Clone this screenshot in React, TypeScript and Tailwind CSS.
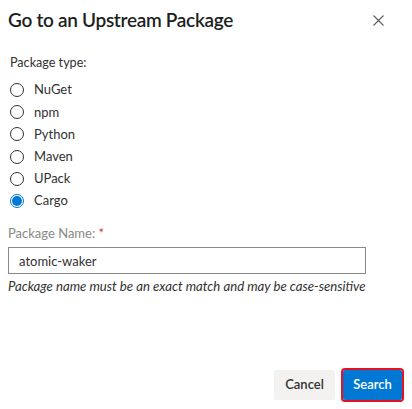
import { useState } from "react";

const types = ["NuGet", "npm", "Python", "Maven", "UPack", "Cargo"];

export default function App() {
  const [selected, setSelected] = useState("Cargo");
  const [name, setName] = useState("atomic-waker");

  return (
    <div
      className="flex flex-col h-[409px] w-[412px] bg-white text-[#323130]"
      style={{ fontFamily: 'Lato, "Noto Sans", sans-serif' }}
    >
      {/* Header */}
      <div className="flex items-start justify-between pl-2 pr-[28px] pt-[6px]">
        <h1 className="text-[19px] leading-[28px] font-semibold tracking-[-0.3px] text-[#201f1e]">
          Go to an Upstream Package
        </h1>
        <button className="mt-[9px] text-[#605e5c]">
          <svg width="11" height="11" viewBox="0 0 11 11">
            <path d="M0.5 0.5 L10.5 10.5 M10.5 0.5 L0.5 10.5" stroke="currentColor" strokeWidth="1.1" />
          </svg>
        </button>
      </div>

      {/* Package type */}
      <div className="pl-[10px] pt-[20px]">
        <div className="text-[12.6px] leading-[18px]">Package type:</div>
        <div className="flex flex-col pt-[7px]">
          {types.map((t) => (
            <label
              key={t}
              className="flex items-center gap-[10px] h-[22.2px] text-[13px] cursor-pointer"
              onClick={() => setSelected(t)}
            >
              {selected === t ? (
                <span className="flex items-center justify-center w-[14px] h-[14px] rounded-full border border-[#0078d4]">
                  <span className="w-[10px] h-[10px] rounded-full bg-[#0078d4]" />
                </span>
              ) : (
                <span className="w-[14px] h-[14px] rounded-full border border-[#323130]" />
              )}
              <span>{t}</span>
            </label>
          ))}
        </div>
      </div>

      {/* Package name */}
      <div className="pl-2 pr-[46px] pt-[12px]">
        <div className="text-[13px] leading-[18px] text-[#8a8886]">
          Package Name: <span className="text-[#d13438]">*</span>
        </div>
        <input
          value={name}
          onChange={(e) => setName(e.target.value)}
          className="mt-[5px] w-full h-[27px] border border-[#8a8886] px-[10px] text-[13px] outline-none"
        />
        <div className="mt-[4px] text-[13.2px] leading-[16px] italic whitespace-nowrap">
          Package name must be an exact match and may be case-sensitive
        </div>
      </div>

      {/* Footer */}
      <div className="mt-auto flex justify-end gap-[8px] pr-[10px] pb-[9px]">
        <button className="h-[30px] w-[61px] bg-[#f3f2f1] text-[13px] font-semibold rounded-[2px]">
          Cancel
        </button>
        <button className="h-[30px] w-[59px] bg-[#0078d4] text-white text-[13px] font-semibold rounded-[2px] outline-2 outline-[#e81123]">
          Search
        </button>
      </div>
    </div>
  );
}
